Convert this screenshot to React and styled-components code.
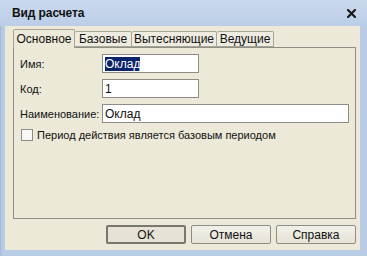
import React from 'react';
import styled, {createGlobalStyle} from 'styled-components';

const GlobalStyle = createGlobalStyle`
  html, body {
    margin: 0;
    padding: 0;
    background: #b5c9e4;
  }
  * {
    box-sizing: border-box;
  }
`;

const StyledWindow = styled.div`
  font-family: 'Liberation Sans', Arial, sans-serif;
  font-size: 11px;
  color: #111111;
  width: 367px;
  height: 256px;
  display: flex;
  flex-direction: column;
  background: linear-gradient(90deg, #9fb6d6 0, #b9cce6 2px, #b9cce6 100%);
  padding: 0 7px 6px 5px;
`;

const StyledTitleBar = styled.div`
  height: 26px;
  display: flex;
  align-items: center;
  justify-content: space-between;
  margin: 0 -7px 0 -5px;
  padding: 0 11px 0 12px;
  background: linear-gradient(180deg, #cbd9ed 0%, #c1d2ea 60%, #bccde7 100%);
`;

const StyledTitle = styled.span`
  font-weight: 700;
  font-size: 12px;
  letter-spacing: -0.1px;
`;

const StyledClose = styled.svg`
  width: 9px;
  height: 9px;
`;

const StyledContent = styled.div`
  flex: 1;
  display: flex;
  flex-direction: column;
  background: #ece9d8;
  padding: 3px 4px 6px 8px;
`;

const StyledTabs = styled.div`
  display: flex;
  align-items: flex-end;
  height: 18px;
  position: relative;
  z-index: 1;
`;

const StyledTab = styled.div`
  width: ${({$width}) => $width}px;
  height: ${({$active}) => ($active ? 19 : 16)}px;
  margin-bottom: ${({$active}) => ($active ? -1 : 0)}px;
  display: flex;
  align-items: center;
  justify-content: center;
  font-size: 12px;
  border: 1px solid #a6a494;
  border-bottom: ${({$active}) => ($active ? 'none' : '1px solid #a6a494')};
  border-left: ${({$first, $active}) => ($first || $active ? '1px solid #a6a494' : 'none')};
  border-radius: 2px 2px 0 0;
  background: ${({$active}) => ($active ? '#ece9d8' : '#eeece1')};
  padding-bottom: ${({$active}) => ($active ? 1 : 0)}px;
`;

const StyledPanel = styled.div`
  flex: 1;
  border: 1px solid #8f8e85;
  padding: 6px;
  display: grid;
  grid-template-columns: 82px 1fr;
  grid-auto-rows: min-content;
  row-gap: 6px;
  align-items: center;
`;

const StyledLabel = styled.label`
  white-space: nowrap;
`;

const StyledField = styled.div`
  width: ${({$wide}) => ($wide ? '100%' : '97px')};
  height: 19px;
  border: 1px solid #8e8c84;
  background: #ffffff;
  display: flex;
  align-items: center;
  padding-left: 2px;
  font-size: 12px;
`;

const StyledSelected = styled.span`
  background: #0a246a;
  color: #ffffff;
`;

const StyledCheckRow = styled.div`
  grid-column: 1 / -1;
  display: flex;
  align-items: center;
  gap: 4px;
  padding-left: 1px;
`;

const StyledCheckbox = styled.div`
  width: 12px;
  height: 12px;
  border: 1px solid #8c8b85;
  background: #f8f8f6;
`;

const StyledButtons = styled.div`
  display: flex;
  justify-content: flex-end;
  gap: 5px;
  margin-top: 6px;
`;

const StyledButton = styled.div`
  width: 80px;
  height: 19px;
  display: flex;
  align-items: center;
  justify-content: center;
  font-size: 12px;
  border: ${({$default}) => ($default ? '2px solid #7a786e' : '1px solid #8e8c84')};
  border-radius: 2px;
  background: ${({$default}) => ($default ? '#e6e3d6' : 'linear-gradient(180deg, #f2f1ea 0%, #e6e3d6 100%)')};
`;

const App = () => (
  <>
    <GlobalStyle />
    <StyledWindow>
      <StyledTitleBar>
        <StyledTitle>Вид расчета</StyledTitle>
        <StyledClose viewBox="0 0 9 9">
          <path d="M1 1 L8 8 M8 1 L1 8" stroke="#1a1a1a" strokeWidth="2.2" strokeLinecap="square" />
        </StyledClose>
      </StyledTitleBar>
      <StyledContent>
        <StyledTabs>
          <StyledTab $active $first $width={62}>Основное</StyledTab>
          <StyledTab $width={57}>Базовые</StyledTab>
          <StyledTab $width={85}>Вытесняющие</StyledTab>
          <StyledTab $width={57}>Ведущие</StyledTab>
        </StyledTabs>
        <StyledPanel>
          <StyledLabel>Имя:</StyledLabel>
          <StyledField>
            <StyledSelected>Оклад</StyledSelected>
          </StyledField>
          <StyledLabel>Код:</StyledLabel>
          <StyledField>1</StyledField>
          <StyledLabel>Наименование:</StyledLabel>
          <StyledField $wide>Оклад</StyledField>
          <StyledCheckRow>
            <StyledCheckbox />
            <span>Период действия является базовым периодом</span>
          </StyledCheckRow>
        </StyledPanel>
        <StyledButtons>
          <StyledButton $default>OK</StyledButton>
          <StyledButton>Отмена</StyledButton>
          <StyledButton>Справка</StyledButton>
        </StyledButtons>
      </StyledContent>
    </StyledWindow>
  </>
);

export default App;
